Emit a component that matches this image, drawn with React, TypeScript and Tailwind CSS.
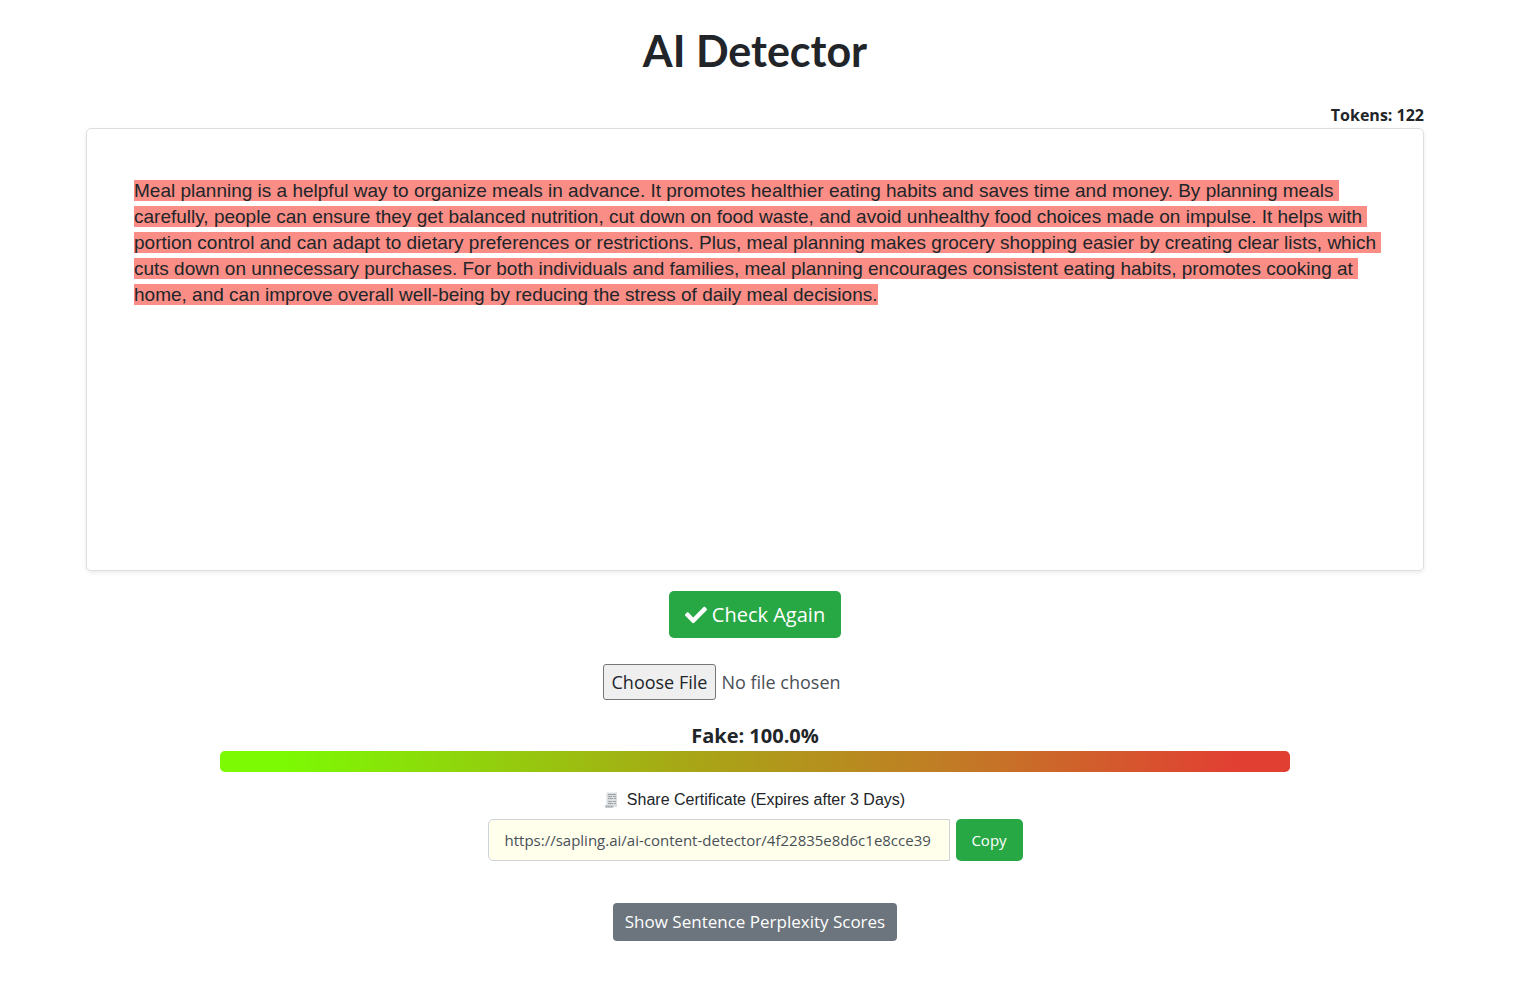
import { useState } from 'react';
import { FaCheck } from 'react-icons/fa';

const INITIAL_TEXT =
  'Meal planning is a helpful way to organize meals in advance. It promotes healthier eating habits and saves time and money. By planning meals carefully, people can ensure they get balanced nutrition, cut down on food waste, and avoid unhealthy food choices made on impulse. It helps with portion control and can adapt to dietary preferences or restrictions. Plus, meal planning makes grocery shopping easier by creating clear lists, which cuts down on unnecessary purchases. For both individuals and families, meal planning encourages consistent eating habits, promotes cooking at home, and can improve overall well-being by reducing the stress of daily meal decisions.';

const SHARE_URL = 'https://sapling.ai/ai-content-detector/4f22835e8d6c1e8cce39';

function HighlightedText({ text }: { text: string }) {
  return (
    <p className="whitespace-pre-wrap font-['Liberation_Sans',Arial,sans-serif] text-[19px] leading-[26px]">
      <mark className="bg-[#fa8e86] text-[#212529]">{text}</mark>
    </p>
  );
}

function ReceiptIcon() {
  return (
    <svg viewBox="0 0 13 16" className="h-4 w-[13px]" aria-hidden="true">
      <path d="M1.5 0.5H12V15H1.5Z" fill="#dcdfe2" />
      <path d="M0 13H8.5V16H1.2Q0 16 0 14.8Z" fill="#c9cdd1" />
      <path
        d="M3 2.5H11M3 4.5H7M8 4.5H11M3 6.5H8M9 6.5H11M3 9.5H7M8 9.5H11M3 11.5H8M9 11.5H11"
        stroke="#9da2a7"
        strokeWidth="1"
      />
      <path d="M1 14.5H8" stroke="#9da2a7" strokeDasharray="1.5 0.8" />
    </svg>
  );
}

export default function App() {
  const [showScores, setShowScores] = useState(false);

  return (
    <main className="flex min-h-screen flex-col items-center bg-white pr-[91px] pb-12 pl-[86px] font-['Open_Sans','Noto_Sans',sans-serif] text-[#212529]">
      <h1 className="pt-6 font-['Lato',sans-serif] text-[43px] leading-[54px] font-bold">AI Detector</h1>

      <div className="mt-[25px] w-full text-right text-[16px] leading-[25px] font-bold">Tokens: 122</div>

      <section
        aria-label="Analyzed text"
        className="min-h-[443px] w-full rounded-[5px] border border-[#dcdfdf] pt-[49px] pr-10 pb-12 pl-[47px] shadow-[0_2px_4px_rgba(0,0,0,0.08)]"
      >
        <HighlightedText text={INITIAL_TEXT} />
      </section>

      <button
        type="button"
        className="mt-5 flex h-[47px] items-center gap-[5px] rounded-[5px] bg-[#28a745] px-4 text-[20px] text-white hover:bg-[#218838]"
      >
        <FaCheck className="h-[22px] w-[22px]" aria-hidden="true" />
        Check Again
      </button>

      <input
        type="file"
        aria-label="Choose a file to analyze"
        className="mt-[26px] h-[36px] w-[305px] text-[18px] leading-[28px] text-[#495057] file:mr-[5px] file:h-[36px] file:rounded-[3px] file:border file:border-solid file:border-[#767676] file:bg-[#efefef] file:px-2 file:text-[#212529]"
      />

      <div className="mt-[21px] text-[20px] leading-[30px] font-bold">Fake: 100.0%</div>
      <div
        role="img"
        aria-label="Score scale from real to fake"
        className="h-[21px] w-4/5 rounded-[5px] bg-[linear-gradient(90deg,#7cfa03_0%,#7cfa03_6%,#a8a616_44%,#c37826_70%,#e23f33_95%,#e23f33_100%)]"
      />

      <label
        htmlFor="share-url"
        className="mt-4 flex items-center gap-[9px] font-['Liberation_Sans',Arial,sans-serif] text-[16px] leading-6"
      >
        <ReceiptIcon />
        Share Certificate (Expires after 3 Days)
      </label>
      <div className="mt-[7px] flex gap-[6px]">
        <input
          id="share-url"
          type="text"
          readOnly
          value={SHARE_URL}
          className="h-[42px] w-[462px] rounded-l-[5px] border border-[#ced4da] bg-[#ffffec] px-4 text-[15px] text-[#495057]"
        />
        <button
          type="button"
          onClick={() => navigator.clipboard?.writeText(SHARE_URL)}
          className="h-[42px] w-[67px] rounded-[5px] bg-[#28a745] text-[15px] text-white hover:bg-[#218838]"
        >
          Copy
        </button>
      </div>

      <button
        type="button"
        aria-pressed={showScores}
        onClick={() => setShowScores(!showScores)}
        className="mt-[42px] h-[38px] rounded-[4px] bg-[#6c757d] px-3 text-[17px] text-white hover:bg-[#5a6268]"
      >
        Show Sentence Perplexity Scores
      </button>
    </main>
  );
}
